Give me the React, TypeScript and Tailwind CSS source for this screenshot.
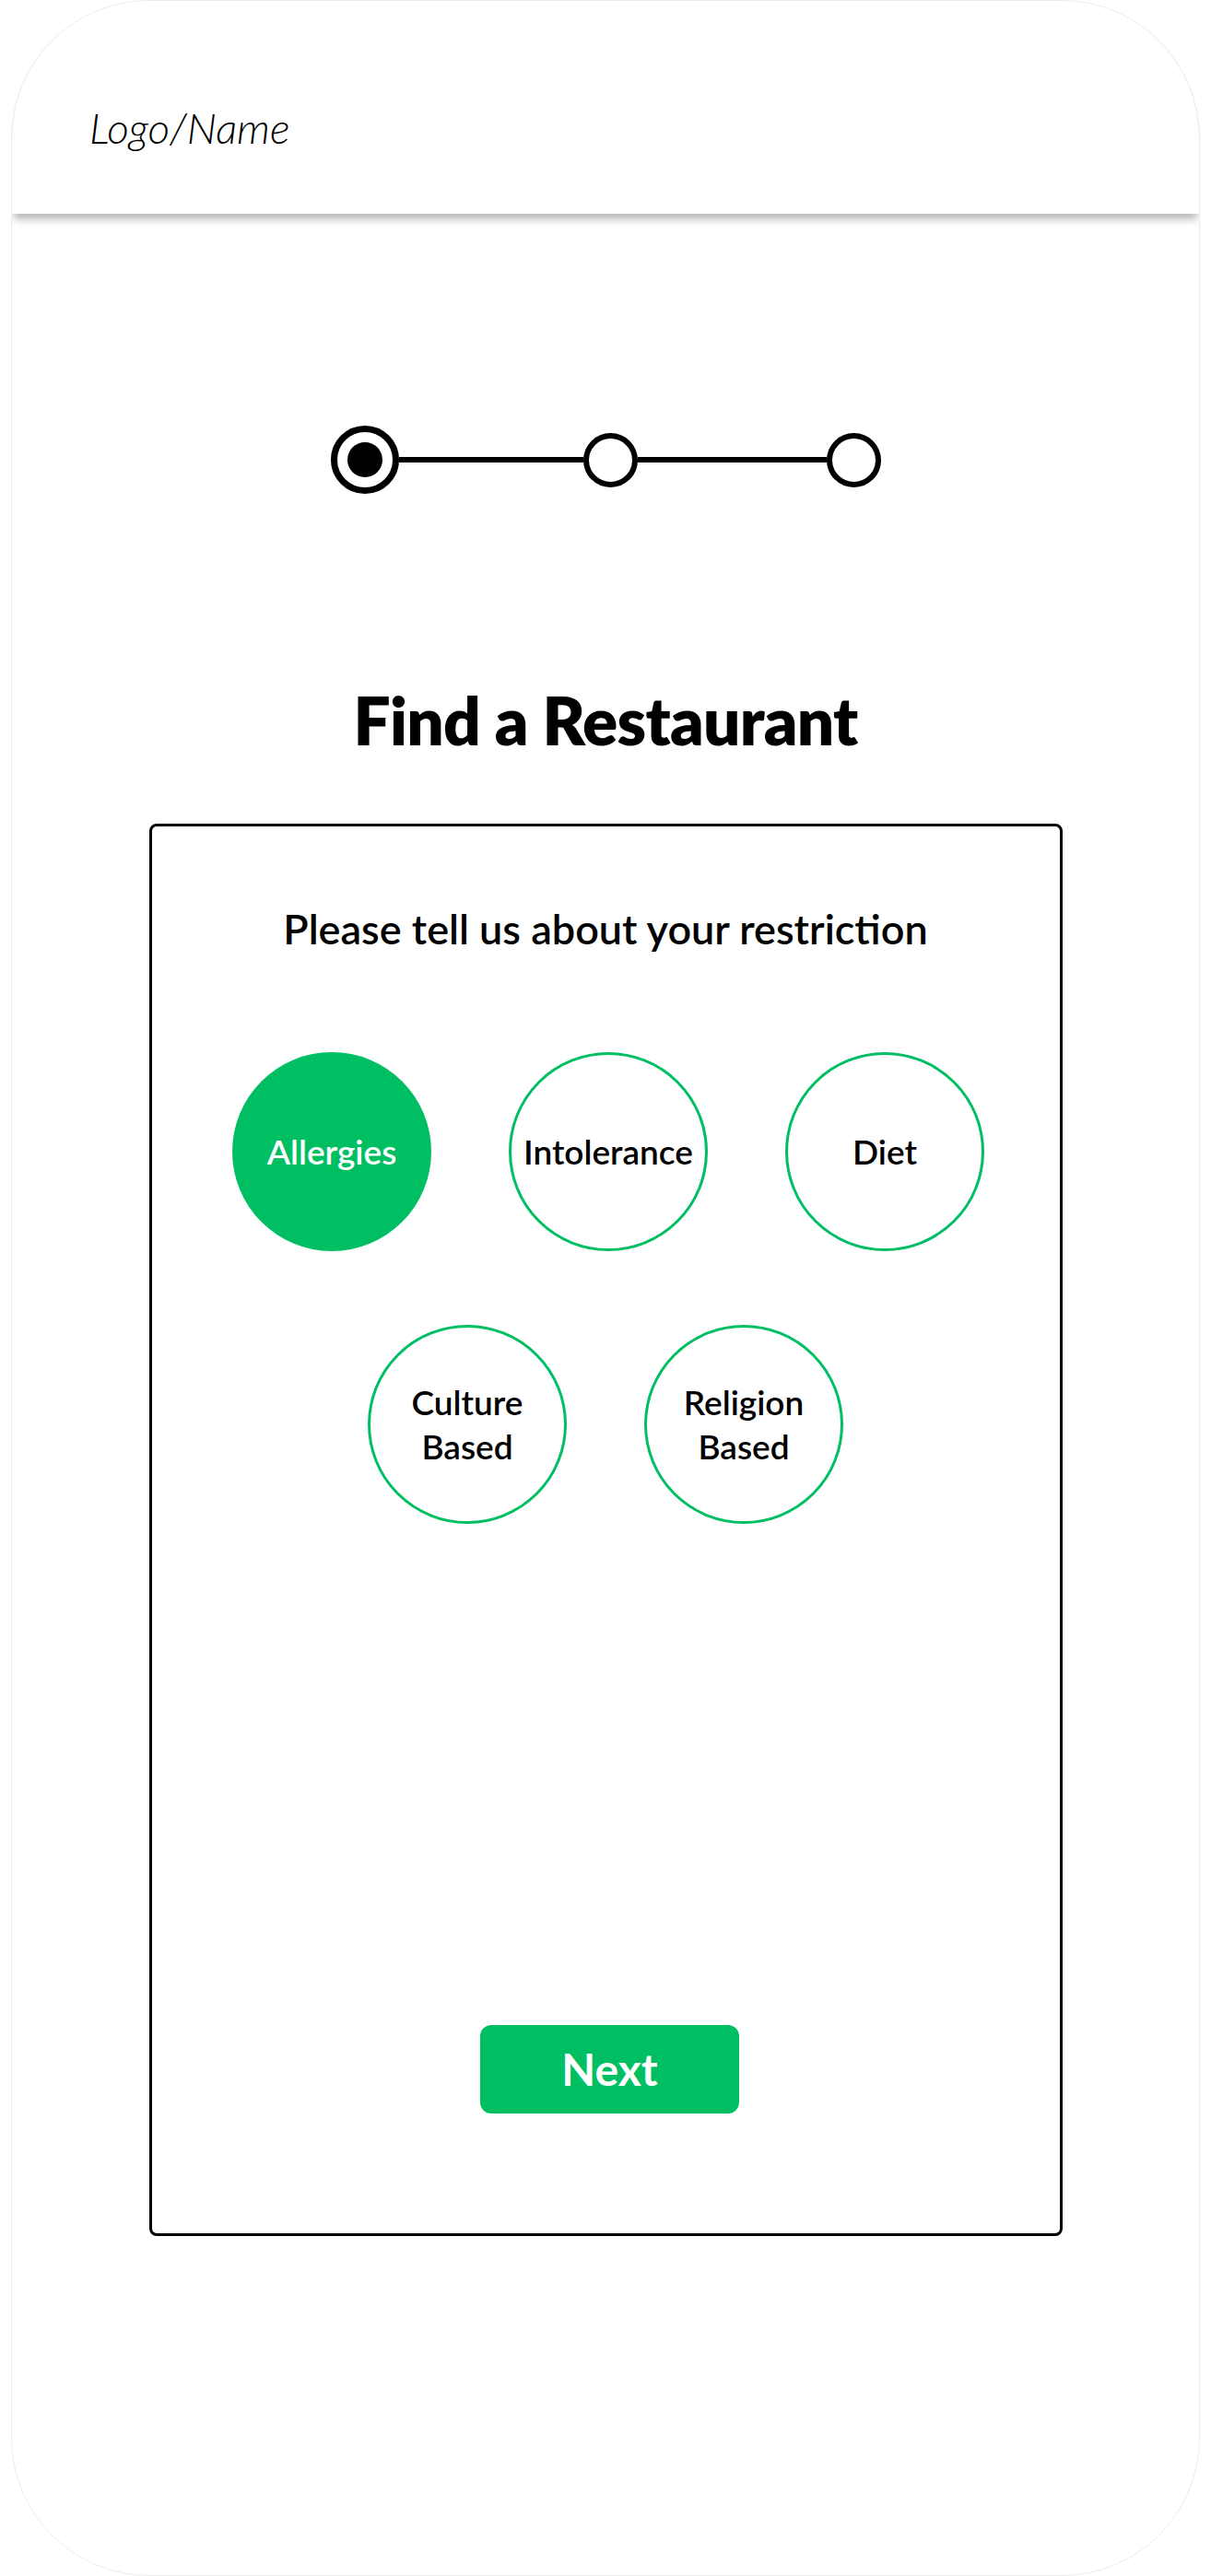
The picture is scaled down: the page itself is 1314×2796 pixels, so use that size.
const GREEN = 'bg-[#00bf63]'

type Option = {
  lines: string[]
  active?: boolean
}

const TOP_ROW: Option[] = [
  { lines: ['Allergies'], active: true },
  { lines: ['Intolerance'] },
  { lines: ['Diet'] },
]

const BOTTOM_ROW: Option[] = [{ lines: ['Culture', 'Based'] }, { lines: ['Religion', 'Based'] }]

function Stepper() {
  return (
    <div className="flex items-center justify-center">
      <div className="flex h-[74px] w-[74px] items-center justify-center rounded-full border-[7px] border-black">
        <div className="h-[38px] w-[38px] rounded-full bg-black" />
      </div>
      <div className="h-[6px] w-[200px] bg-black" />
      <div className="h-[59px] w-[59px] rounded-full border-[6px] border-black bg-white" />
      <div className="h-[6px] w-[205px] bg-black" />
      <div className="h-[59px] w-[59px] rounded-full border-[6px] border-black bg-white" />
    </div>
  )
}

function OptionCircle({ option }: { option: Option }) {
  return (
    <button
      className={
        option.active
          ? `flex h-[216px] w-[216px] flex-col items-center justify-center rounded-full ${GREEN} text-[37px] leading-[48px] font-semibold text-white`
          : 'flex h-[216px] w-[216px] flex-col items-center justify-center rounded-full border-[3px] border-[#00bf63] bg-white text-[37px] leading-[48px] font-semibold text-black'
      }
    >
      {option.lines.map((line) => (
        <span key={line}>{line}</span>
      ))}
    </button>
  )
}

export default function App() {
  return (
    <div className="w-full bg-white font-['Lato','Noto_Sans',sans-serif] text-black">
      <div className="mx-[12px] flex h-[2796px] flex-col overflow-hidden rounded-[150px] border border-[#ebebeb] bg-white">
        <header className="h-[231px] shrink-0 rounded-t-[150px] bg-white pt-[115px] pl-[84px] shadow-[0_8px_8px_-2px_rgba(0,0,0,0.28)]">
          <p className="text-[46px] leading-none font-light italic">Logo/Name</p>
        </header>

        <div className="mt-[230px]">
          <Stepper />
        </div>

        <h1 className="mt-[210px] text-center text-[71px] leading-none font-extrabold tracking-[-0.01em]">
          Find a Restaurant
        </h1>

        <section className="mx-auto mt-[77px] flex h-[1533px] w-[991px] flex-col items-center rounded-[8px] border-[3px] border-black pt-[89px] pb-[130px]">
          <h2 className="text-[45px] leading-none font-semibold">Please tell us about your restriction</h2>

          <div className="mt-[111px] flex flex-col items-center gap-[80px]">
            <div className="ml-[6px] flex gap-[84px]">
              {TOP_ROW.map((o) => (
                <OptionCircle key={o.lines.join(' ')} option={o} />
              ))}
            </div>
            <div className="flex gap-[84px]">
              {BOTTOM_ROW.map((o) => (
                <OptionCircle key={o.lines.join(' ')} option={o} />
              ))}
            </div>
          </div>

          <button className={`mt-auto ml-[9px] flex h-[96px] w-[281px] items-center justify-center rounded-[12px] ${GREEN} text-[48px] font-bold text-white`}>
            Next
          </button>
        </section>
      </div>
    </div>
  )
}
